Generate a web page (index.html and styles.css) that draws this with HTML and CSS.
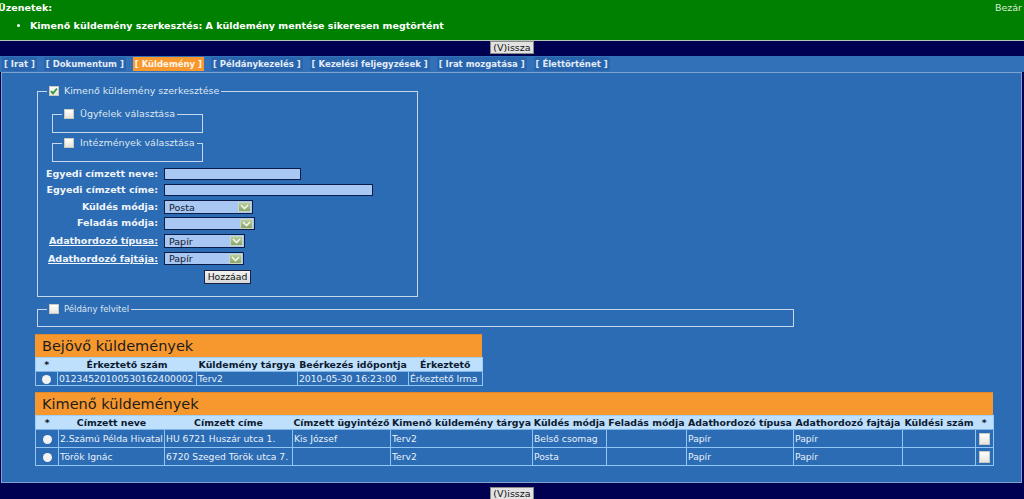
FILE: index.html
```html
<!DOCTYPE html>
<html lang="hu">
<head>
<meta charset="utf-8">
<title>Küldemény</title>
<link rel="stylesheet" href="styles.css">
</head>
<body>
<div class="msgbar">
  <div class="msghead"><span class="msgtitle">Üzenetek:</span><span class="close">Bezár</span></div>
  <ul class="msglist"><li>Kimenő küldemény szerkesztés: A küldemény mentése sikeresen megtörtént</li></ul>
</div>
<div class="navbar"><span class="btn">(V)issza</span></div>
<div class="tabs">
  <span class="tab">[ Irat ]</span>
  <span class="tab">[ Dokumentum ]</span>
  <span class="tab active">[ Küldemény ]</span>
  <span class="tab">[ Példánykezelés ]</span>
  <span class="tab">[ Kezelési feljegyzések ]</span>
  <span class="tab">[ Irat mozgatása ]</span>
  <span class="tab">[ Élettörténet ]</span>
</div>
<div class="panel">
  <fieldset class="fs main">
    <legend><span class="cb"><svg width="8" height="8" viewBox="0 0 8 8"><path d="M1 4.2 L3 6.3 L7 1.5" fill="none" stroke="#2f9a2f" stroke-width="1.8"/></svg></span>Kimenő küldemény szerkesztése</legend>
    <fieldset class="fs sub"><legend><span class="cb"></span>Ügyfelek választása</legend></fieldset>
    <fieldset class="fs sub"><legend><span class="cb"></span>Intézmények választása</legend></fieldset>
    <div class="form">
      <span class="lbl">Egyedi címzett neve:</span><span class="txt w-neve"></span>
      <span class="lbl">Egyedi címzett címe:</span><span class="txt w-cime"></span>
      <span class="lbl tall">Küldés módja:</span><span class="sel w-kuld">Posta<span class="arrow"><svg width="9" height="6" viewBox="0 0 9 6"><path d="M1 1 L4.5 4.5 L8 1" fill="none" stroke="#f2f6ea" stroke-width="1.6"/></svg></span></span>
      <span class="lbl">Feladás módja:</span><span class="sel short w-fel"><span class="arrow"><svg width="9" height="6" viewBox="0 0 9 6"><path d="M1 1 L4.5 4.5 L8 1" fill="none" stroke="#f2f6ea" stroke-width="1.6"/></svg></span></span>
      <span class="lbl u">Adathordozó típusa:</span><span class="sel w-tip">Papír<span class="arrow"><svg width="9" height="6" viewBox="0 0 9 6"><path d="M1 1 L4.5 4.5 L8 1" fill="none" stroke="#f2f6ea" stroke-width="1.6"/></svg></span></span>
      <span class="lbl u">Adathordozó fajtája:</span><span class="sel short w-faj">Papír<span class="arrow"><svg width="9" height="6" viewBox="0 0 9 6"><path d="M1 1 L4.5 4.5 L8 1" fill="none" stroke="#f2f6ea" stroke-width="1.6"/></svg></span></span>
      <div class="addrow"><span class="addbtn">Hozzáad</span></div>
    </div>
  </fieldset>
  <fieldset class="fs pfs"><legend><span class="cb"></span>Példány felvitel</legend></fieldset>

  <div class="block narrow">
    <div class="bhead">Bejövő küldemények</div>
    <table class="grid">
      <colgroup><col style="width:22px"><col style="width:139px"><col style="width:101px"><col style="width:111px"><col style="width:74px"></colgroup>
      <thead><tr><th>*</th><th>Érkeztető szám</th><th>Küldemény tárgya</th><th>Beérkezés időpontja</th><th>Érkeztető</th></tr></thead>
      <tbody>
        <tr class="r15"><td class="c"><span class="rb"></span></td><td>01234520100530162400002</td><td>Terv2</td><td>2010-05-30 16:23:00</td><td>Érkeztető Irma</td></tr>
      </tbody>
    </table>
  </div>

  <div class="block wide">
    <div class="bhead">Kimenő küldemények</div>
    <table class="grid">
      <colgroup><col style="width:23px"><col style="width:106px"><col style="width:128px"><col style="width:98px"><col style="width:142px"><col style="width:74px"><col style="width:80px"><col style="width:107px"><col style="width:109px"><col style="width:73px"><col style="width:18px"></colgroup>
      <thead><tr><th>*</th><th>Címzett neve</th><th>Címzett címe</th><th>Címzett ügyintéző</th><th>Kimenő küldemény tárgya</th><th>Küldés módja</th><th>Feladás módja</th><th>Adathordozó típusa</th><th>Adathordozó fajtája</th><th>Küldési szám</th><th>*</th></tr></thead>
      <tbody>
        <tr class="r17"><td class="c"><span class="rb"></span></td><td>2.Számú Példa Hivatal</td><td>HU 6721 Huszár utca 1.</td><td>Kis József</td><td>Terv2</td><td>Belső csomag</td><td></td><td>Papír</td><td>Papír</td><td></td><td class="c"><span class="cb sq"></span></td></tr>
        <tr class="r17"><td class="c"><span class="rb"></span></td><td>Török Ignác</td><td>6720 Szeged Török utca 7.</td><td></td><td>Terv2</td><td>Posta</td><td></td><td>Papír</td><td>Papír</td><td></td><td class="c"><span class="cb sq"></span></td></tr>
      </tbody>
    </table>
  </div>
</div>
<div class="navbar bottom"><span class="btn">(V)issza</span></div>
</body>
</html>
```

FILE: styles.css
```css
html, body {
  margin: 0;
  padding: 0;
}
body {
  background: #000050;
  font-family: "DejaVu Sans", Verdana, sans-serif;
  height: 499px;
  overflow: hidden;
}

/* message bar */
.msgbar {
  background: #008000;
  height: 40px;
  border-bottom: 1px solid #b9c6b9;
  color: #ffffff;
}
.msghead {
  display: flex;
  justify-content: space-between;
  align-items: center;
  height: 14px;
}
.msgtitle {
  font-weight: bold;
  font-size: 9.5px;
  margin-left: -2px;
}
.close {
  font-size: 9.5px;
  color: #d8ecd8;
  margin-right: 2px;
}
.msglist {
  margin: 5px 0 0 0;
  padding: 0 0 0 30px;
  list-style: disc;
  font-weight: bold;
  font-size: 9.5px;
  line-height: 14px;
}

/* nav bars */
.navbar {
  height: 15px;
  display: flex;
  justify-content: center;
  align-items: flex-start;
}
.navbar.bottom {
  height: 12px;
  padding-top: 4px;
}
.btn {
  display: inline-block;
  font-size: 9.5px;
  line-height: 11px;
  height: 11px;
  padding: 0 2px;
  border: 1px solid #8a8a8a;
  background: #e2e2e2;
  color: #111;
}

/* tabs */
.tabs {
  display: flex;
  gap: 7px;
  height: 14px;
  padding: 1px 2px;
  background: #3271b8;
}
.tab {
  font-size: 8.5px;
  font-weight: bold;
  line-height: 14px;
  padding: 0 2px;
  color: #e4ecf8;
  background: #2865ad;
}
.tab.active {
  background: #f7982f;
  color: #fff6ea;
}

/* panel */
.panel {
  background: #2b6cb4;
  border: 1px solid #7ea3cf;
  margin: 0 2px 0 1px;
  height: 409px;
  padding: 0 0 0 33px;
}

/* fieldsets */
.fs {
  border: 1px solid #c8d8ec;
  margin: 0;
  padding: 0;
  min-width: 0;
  box-sizing: border-box;
}
.fs legend {
  display: flex;
  align-items: center;
  gap: 5px;
  height: 12px;
  line-height: 12px;
  padding: 0 2px;
  margin-left: 9px;
  font-size: 9.5px;
  color: #dfe7f2;
}
.main {
  width: 381px;
  margin: 12px 0 0 2px;
  padding: 0 0 12px 0;
}
.sub {
  width: 151px;
  margin: 11px 0 0 14px;
  padding: 0 0 12px 0;
}
.sub + .sub {
  margin-top: 4px;
}
.sub legend {
  gap: 6px;
}
.pfs {
  width: 757px;
  margin: 6px 0 0 2px;
  padding: 0 0 11px 0;
}
.pfs legend {
  font-size: 8.5px;
}

.cb {
  display: inline-flex;
  align-items: center;
  justify-content: center;
  width: 8px;
  height: 8px;
  border: 1px solid #c9c9c0;
  background: linear-gradient(#ffffff, #e6e4dc);
  flex: none;
}
.cb.sq {
  width: 9px;
  height: 10px;
  vertical-align: middle;
}
.rb {
  display: inline-block;
  width: 9px;
  height: 9px;
  border-radius: 50%;
  background: #f2f2f2;
  vertical-align: middle;
}

/* form */
.form {
  display: grid;
  grid-template-columns: 120px 1fr;
  grid-template-rows: 16px 16px 17px 17px 18px 18px auto;
  column-gap: 6px;
  align-items: start;
  margin-top: 6px;
}
.lbl {
  justify-self: end;
  font-size: 9.5px;
  font-weight: bold;
  color: #f2f5fa;
  line-height: 12px;
  white-space: nowrap;
}
.lbl.tall {
  line-height: 14px;
}
.lbl.u {
  text-decoration: underline;
  line-height: 13px;
}
.txt {
  display: block;
  height: 12px;
  box-sizing: border-box;
  border: 1px solid #0b1c46;
  background: #a8c7f2;
}
.w-neve { width: 137px; }
.w-cime { width: 209px; }
.sel {
  display: flex;
  align-items: center;
  justify-content: space-between;
  height: 14px;
  box-sizing: border-box;
  border: 1px solid #0b1c46;
  background: #a8c7f2;
  padding: 0 1px 0 4px;
  font-size: 9.5px;
  color: #141a30;
}
.sel.short { height: 13px; }
.w-kuld { width: 89px; }
.w-fel { width: 91px; }
.w-tip { width: 81px; }
.w-faj { width: 80px; }
.arrow {
  display: flex;
  align-items: center;
  justify-content: center;
  width: 13px;
  height: 10px;
  margin-left: auto;
  background: linear-gradient(#b7cc9c, #8aa56c);
  border: 1px solid #c8d8c0;
  box-sizing: border-box;
}
.addrow {
  grid-column: 1 / -1;
  display: flex;
  justify-content: center;
}
.addbtn {
  display: block;
  height: 12px;
  line-height: 12px;
  padding: 0 3px;
  font-size: 9.3px;
  color: #111;
  background: linear-gradient(#f2f2f2, #d8d8d8);
  border: 1px solid #1a2240;
}

/* tables */
.block {
  margin-top: 7px;
}
.block.wide {
  margin-top: 6px;
  width: 958px;
}
.block.narrow {
  width: 447px;
}
.bhead {
  background: #f7982f;
  height: 23px;
  line-height: 23px;
  padding-left: 7px;
  font-size: 14.5px;
  color: #1c1c1c;
  border-top: 1px solid #e2882a;
  box-sizing: border-box;
}
.grid {
  width: 100%;
  table-layout: fixed;
  border-collapse: collapse;
  border: 1px solid #9ccff9;
}
.grid th {
  background: #bfe0fc;
  color: #0c1a30;
  font-size: 9.4px;
  font-weight: bold;
  height: 13px;
  padding: 0;
  text-align: center;
  white-space: nowrap;
  overflow: hidden;
  border-bottom: 1px solid #7fb4e6;
}
.grid td {
  border: 1px solid #8fc6f5;
  color: #eaf1fa;
  font-size: 9.2px;
  padding: 0 1px;
  white-space: nowrap;
  overflow: hidden;
}
.grid td.c {
  text-align: center;
  padding: 0;
}
.r15 td { height: 13px; }
.r17 td { height: 17px; }
```
